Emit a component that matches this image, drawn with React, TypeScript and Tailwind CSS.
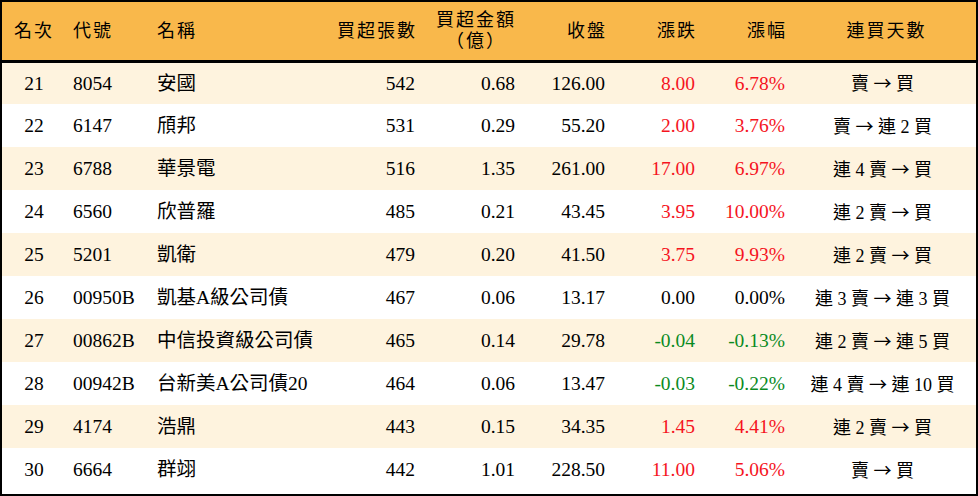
const rows = [
  { rank: 21, code: "8054", name: "安國", vol: "542", amt: "0.68", close: "126.00", chg: "8.00", pct: "6.78%", streak: ["賣", "買"] },
  { rank: 22, code: "6147", name: "頎邦", vol: "531", amt: "0.29", close: "55.20", chg: "2.00", pct: "3.76%", streak: ["賣", "連 2 買"] },
  { rank: 23, code: "6788", name: "華景電", vol: "516", amt: "1.35", close: "261.00", chg: "17.00", pct: "6.97%", streak: ["連 4 賣", "買"] },
  { rank: 24, code: "6560", name: "欣普羅", vol: "485", amt: "0.21", close: "43.45", chg: "3.95", pct: "10.00%", streak: ["連 2 賣", "買"] },
  { rank: 25, code: "5201", name: "凱衛", vol: "479", amt: "0.20", close: "41.50", chg: "3.75", pct: "9.93%", streak: ["連 2 賣", "買"] },
  { rank: 26, code: "00950B", name: "凱基A級公司債", vol: "467", amt: "0.06", close: "13.17", chg: "0.00", pct: "0.00%", streak: ["連 3 賣", "連 3 買"] },
  { rank: 27, code: "00862B", name: "中信投資級公司債", vol: "465", amt: "0.14", close: "29.78", chg: "-0.04", pct: "-0.13%", streak: ["連 2 賣", "連 5 買"] },
  { rank: 28, code: "00942B", name: "台新美A公司債20", vol: "464", amt: "0.06", close: "13.47", chg: "-0.03", pct: "-0.22%", streak: ["連 4 賣", "連 10 買"] },
  { rank: 29, code: "4174", name: "浩鼎", vol: "443", amt: "0.15", close: "34.35", chg: "1.45", pct: "4.41%", streak: ["連 2 賣", "買"] },
  { rank: 30, code: "6664", name: "群翊", vol: "442", amt: "1.01", close: "228.50", chg: "11.00", pct: "5.06%", streak: ["賣", "買"] },
];

function tone(v: string) {
  if (v.startsWith("-")) return "text-[#0a8a1e]";
  if (parseFloat(v) > 0) return "text-[#f5141e]";
  return "text-black";
}

export default function App() {
  return (
    <div
      className="w-[978px] h-[496px] border-2 border-black bg-white text-black"
      style={{ fontFamily: '"Liberation Serif", "Noto Sans CJK TC", serif' }}
    >
      <table className="w-[974px] table-fixed border-collapse text-[19.5px] leading-none">
        <colgroup>
          <col className="w-[64px]" />
          <col className="w-[84px]" />
          <col className="w-[180px]" />
          <col className="w-[95px]" />
          <col className="w-[100px]" />
          <col className="w-[90px]" />
          <col className="w-[90px]" />
          <col className="w-[90px]" />
          <col className="w-[181px]" />
        </colgroup>
        <thead>
          <tr className="h-[59px] bg-[#f9b84b] border-b-[3px] border-black text-[18px] tracking-[2px]">
            <th className="text-center font-normal">名次</th>
            <th className="text-left font-normal pl-[7px]">代號</th>
            <th className="text-left font-normal pl-[7px]">名稱</th>
            <th className="text-right font-normal pr-[8px]">買超張數</th>
            <th className="text-center font-normal leading-[21px] pl-[2px]">
              買超金額
              <br />
              （億）
            </th>
            <th className="text-right font-normal pr-[8px]">收盤</th>
            <th className="text-right font-normal pr-[8px]">漲跌</th>
            <th className="text-right font-normal pr-[8px]">漲幅</th>
            <th className="text-center font-normal pl-[2px]">連買天數</th>
          </tr>
        </thead>
        <tbody>
          {rows.map((r, i) => (
            <tr key={r.rank} className={`h-[43px] ${i % 2 === 0 ? "bg-[#fef3de]" : "bg-white"}`}>
              <td className="text-center">{r.rank}</td>
              <td className="pl-[7px]">{r.code}</td>
              <td className="pl-[7px] whitespace-nowrap">{r.name}</td>
              <td className="text-right pr-[10px]">{r.vol}</td>
              <td className="text-right pr-[10px]">{r.amt}</td>
              <td className="text-right pr-[10px]">{r.close}</td>
              <td className={`text-right pr-[10px] ${tone(r.chg)}`}>{r.chg}</td>
              <td className={`text-right pr-[10px] ${tone(r.pct)}`}>{r.pct}</td>
              <td className="text-center whitespace-nowrap text-[18px] pr-[6px]">
                {r.streak[0]}{" "}
                <span style={{ fontFamily: '"Noto Sans CJK TC", sans-serif' }}>→</span>{" "}
                {r.streak[1]}
              </td>
            </tr>
          ))}
        </tbody>
      </table>
    </div>
  );
}
